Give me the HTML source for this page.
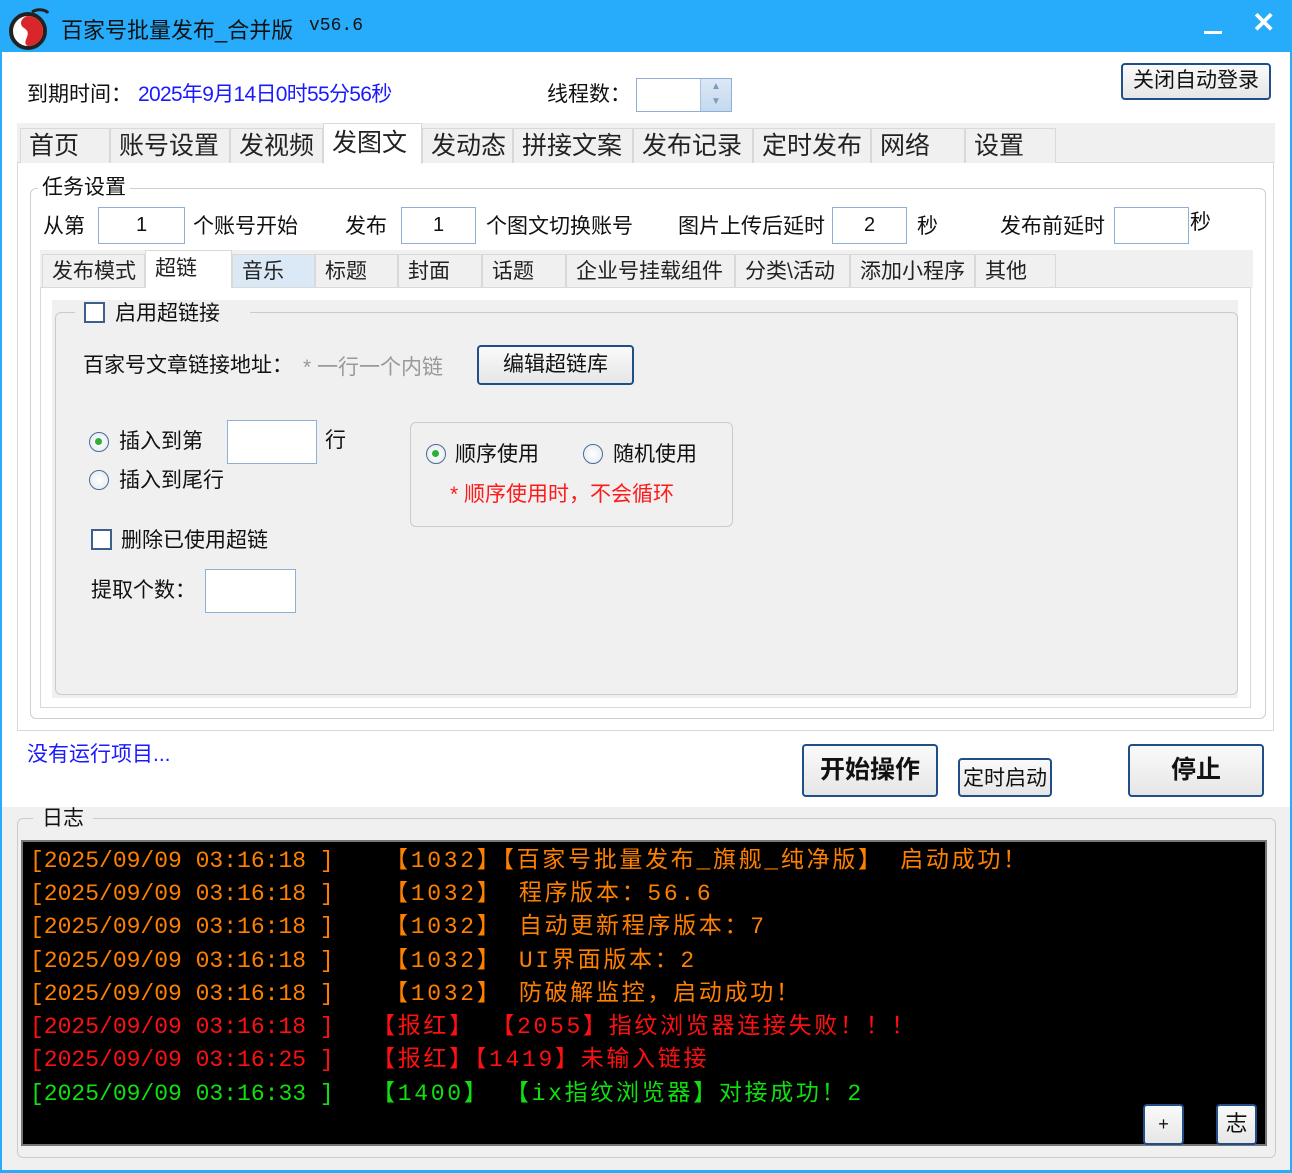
<!DOCTYPE html>
<html><head><meta charset="utf-8"><style>
*{margin:0;padding:0;box-sizing:border-box}
body{width:1292px;height:1173px;position:relative;background:#fff;font-family:"Liberation Sans","Noto Sans CJK SC",sans-serif;color:#111;overflow:hidden}
.a{position:absolute;white-space:nowrap}
.t{font-size:21px;line-height:1}
.inp{position:absolute;background:#fff;border:1px solid #8fb0d4;font-size:20px;text-align:center}
.btn{position:absolute;border:2px solid #1f4f86;border-radius:4px;background:linear-gradient(#fafafa,#e6e6e6);text-align:center;color:#111}
.tab{position:absolute;top:128px;height:35px;border:1px solid #d9d9d9;border-bottom:none;background:#f0f0f0;font-size:25px;line-height:34px;padding-left:8px;color:#222}
.st{position:absolute;top:254px;height:33px;border:1px solid #d9d9d9;border-bottom:none;background:#f0f0f0;font-size:21px;line-height:33px;padding-left:9px;color:#222}
.rad{position:absolute;width:20px;height:20px;border-radius:50%;border:1.5px solid #4a6c93;background:radial-gradient(#fff,#e2e7ee)}
.rad.on::after{content:"";position:absolute;left:5px;top:5px;width:7px;height:7px;border-radius:50%;background:#2fae3a}
.cb{position:absolute;width:21px;height:21px;border:2px solid #3c5f8c;background:#fff}
.log{position:absolute;left:30px;font-family:"Liberation Mono","Noto Sans CJK SC",monospace;font-size:23px;line-height:33px;white-space:nowrap}
.w{letter-spacing:2.7px}
.o{color:#ff8000}.r{color:#ff1010}.g{color:#10e010}
</style></head><body>
<div class="a" style="left:0;top:0;width:1292px;height:52px;background:#27acfc"></div>
<svg class="a" style="left:6px;top:6px" width="46" height="44" viewBox="0 0 46 44"><circle cx="22" cy="25" r="17" fill="#fff" stroke="#222" stroke-width="4"/><path d="M22 10 A15 15 0 0 1 22 40 C14 36 28 28 18 22 C12 18 16 11 22 10Z" fill="#d9262a"/><path d="M26 6 C32 2 40 4 42 7" stroke="#222" stroke-width="3" fill="none"/></svg>
<div class="a" style="left:61px;top:13px;font-size:22px;color:#111">百家号批量发布_合并版</div>
<div class="a" style="left:309px;top:16px;font-size:18px;font-family:'Liberation Mono',monospace;color:#111">v56.6</div>
<div class="a" style="left:1204px;top:31px;width:18px;height:3px;background:#fff"></div>
<div class="a" style="left:1252px;top:6px;font-size:28px;color:#fff;font-weight:bold">✕</div>
<div class="a" style="left:0;top:52px;width:2px;height:1121px;background:#27acfc"></div>
<div class="a" style="left:1290px;top:52px;width:2px;height:1121px;background:#27acfc"></div>
<div class="a" style="left:0;top:1170px;width:1292px;height:3px;background:#27acfc"></div>

<div class="a t" style="left:27px;top:84px">到期时间：</div>
<div class="a t" style="left:138px;top:84px;color:#1a1aff;letter-spacing:-0.7px">2025年9月14日0时55分56秒</div>
<div class="a t" style="left:547px;top:84px">线程数：</div>
<div class="inp" style="left:636px;top:78px;width:96px;height:34px;border-color:#8fb0d4"></div>
<div class="a" style="left:700px;top:79px;width:31px;height:32px;background:linear-gradient(#dbe8f6,#c5d9ef);border-left:1px solid #a9c2de;font-size:10px;color:#7d9ab8;text-align:center;line-height:15px">▲<br>▼</div>
<div class="btn" style="left:1121px;top:63px;width:150px;height:37px;font-size:21px;line-height:32px">关闭自动登录</div>

<div class="a" style="left:17px;top:123px;width:1258px;height:40px;background:#f0f0f0"></div>
<div class="a" style="left:17px;top:162px;width:1257px;height:569px;border:1px solid #d9d9d9;background:#fff"></div>
<div class="tab" style="left:20px;width:90px">首页</div>
<div class="tab" style="left:110px;width:120px">账号设置</div>
<div class="tab" style="left:230px;width:93px">发视频</div>
<div class="tab" style="left:323px;width:99px;top:123px;height:41px;background:#fff;line-height:38px">发图文</div>
<div class="tab" style="left:422px;width:91px">发动态</div>
<div class="tab" style="left:513px;width:120px">拼接文案</div>
<div class="tab" style="left:633px;width:120px">发布记录</div>
<div class="tab" style="left:753px;width:118px">定时发布</div>
<div class="tab" style="left:871px;width:94px">网络</div>
<div class="tab" style="left:965px;width:91px">设置</div>

<div class="a" style="left:30px;top:188px;width:1236px;height:531px;border:1px solid #cfcfcf;border-radius:6px"></div>
<div class="a t" style="left:38px;top:177px;background:#fff;padding:0 4px">任务设置</div>
<div class="a t" style="left:43px;top:216px">从第</div>
<div class="inp" style="left:98px;top:207px;width:87px;height:37px;line-height:35px">1</div>
<div class="a t" style="left:193px;top:216px">个账号开始</div>
<div class="a t" style="left:345px;top:216px">发布</div>
<div class="inp" style="left:401px;top:207px;width:75px;height:37px;line-height:35px">1</div>
<div class="a t" style="left:486px;top:216px">个图文切换账号</div>
<div class="a t" style="left:678px;top:216px">图片上传后延时</div>
<div class="inp" style="left:832px;top:207px;width:75px;height:37px;line-height:35px">2</div>
<div class="a t" style="left:917px;top:216px">秒</div>
<div class="a t" style="left:1000px;top:216px">发布前延时</div>
<div class="inp" style="left:1114px;top:207px;width:75px;height:37px"></div>
<div class="a t" style="left:1190px;top:212px">秒</div>

<div class="a" style="left:40px;top:250px;width:1213px;height:38px;background:#f0f0f0"></div>
<div class="a" style="left:40px;top:287px;width:1211px;height:421px;border:1px solid #d9d9d9;background:#fff"></div>
<div class="st" style="left:42px;width:103px">发布模式</div>
<div class="st" style="left:145px;width:87px;top:250px;height:38px;background:#fff;line-height:36px">超链</div>
<div class="st" style="left:232px;width:83px;background:#dbe8f6">音乐</div>
<div class="st" style="left:315px;width:83px">标题</div>
<div class="st" style="left:398px;width:84px">封面</div>
<div class="st" style="left:482px;width:84px">话题</div>
<div class="st" style="left:566px;width:169px">企业号挂载组件</div>
<div class="st" style="left:735px;width:115px">分类\活动</div>
<div class="st" style="left:850px;width:125px">添加小程序</div>
<div class="st" style="left:975px;width:81px">其他</div>

<div class="a" style="left:52px;top:300px;width:1186px;height:398px;background:#f0f0f0"></div>
<div class="a" style="left:55px;top:312px;width:1183px;height:383px;border:1px solid #cbcbcb;border-radius:6px"></div>
<div class="a" style="left:75px;top:300px;width:175px;height:26px;background:#f0f0f0"></div>
<div class="cb" style="left:84px;top:302px;border-color:#3c5f8c"></div>
<div class="a t" style="left:115px;top:303px">启用超链接</div>
<div class="a t" style="left:83px;top:355px">百家号文章链接地址：</div>
<div class="a t" style="left:303px;top:357px;color:#999">* 一行一个内链</div>
<div class="btn" style="left:477px;top:345px;width:157px;height:40px;font-size:21px;line-height:36px">编辑超链库</div>
<div class="rad on" style="left:89px;top:432px"></div>
<div class="a t" style="left:119px;top:431px">插入到第</div>
<div class="inp" style="left:227px;top:420px;width:90px;height:44px"></div>
<div class="a t" style="left:325px;top:430px">行</div>
<div class="rad" style="left:89px;top:470px"></div>
<div class="a t" style="left:119px;top:470px">插入到尾行</div>
<div class="a" style="left:410px;top:422px;width:323px;height:105px;border:1px solid #cbcbcb;border-radius:6px"></div>
<div class="rad on" style="left:426px;top:444px"></div>
<div class="a t" style="left:455px;top:444px">顺序使用</div>
<div class="rad" style="left:583px;top:444px"></div>
<div class="a t" style="left:613px;top:444px">随机使用</div>
<div class="a t" style="left:450px;top:484px;color:#ff1a1a">* 顺序使用时，不会循环</div>
<div class="cb" style="left:91px;top:529px"></div>
<div class="a t" style="left:121px;top:530px">删除已使用超链</div>
<div class="a t" style="left:91px;top:580px">提取个数：</div>
<div class="inp" style="left:205px;top:569px;width:91px;height:44px"></div>

<div class="a t" style="left:27px;top:744px;color:#1a1aff">没有运行项目...</div>
<div class="btn" style="left:802px;top:744px;width:136px;height:53px;font-size:25px;font-weight:bold;line-height:48px">开始操作</div>
<div class="btn" style="left:958px;top:758px;width:94px;height:39px;font-size:21px;line-height:38px">定时启动</div>
<div class="btn" style="left:1128px;top:744px;width:136px;height:53px;font-size:25px;font-weight:bold;line-height:48px">停止</div>

<div class="a" style="left:2px;top:807px;width:1288px;height:363px;background:#f0f0f0"></div>
<div class="a" style="left:17px;top:818px;width:1259px;height:340px;border:1px solid #cbcbcb;border-radius:6px"></div>
<div class="a t" style="left:33px;top:808px;background:#f0f0f0;padding:0 9px">日志</div>
<div class="a" style="left:21px;top:840px;width:1246px;height:306px;background:#000;border:2px solid #777"></div>
<div class="log o" style="top:845px">[2025/09/09 03:16:18 ]</div><div class="log o w" style="left:385px;top:845px">【1032】【百家号批量发布_旗舰_纯净版】 启动成功！</div>
<div class="log o" style="top:878px">[2025/09/09 03:16:18 ]</div><div class="log o w" style="left:385px;top:878px">【1032】 程序版本：56.6</div>
<div class="log o" style="top:911px">[2025/09/09 03:16:18 ]</div><div class="log o w" style="left:385px;top:911px">【1032】 自动更新程序版本：7</div>
<div class="log o" style="top:945px">[2025/09/09 03:16:18 ]</div><div class="log o w" style="left:385px;top:945px">【1032】 UI界面版本：2</div>
<div class="log o" style="top:978px">[2025/09/09 03:16:18 ]</div><div class="log o w" style="left:385px;top:978px">【1032】 防破解监控，启动成功！</div>
<div class="log r" style="top:1011px">[2025/09/09 03:16:18 ]</div><div class="log r w" style="left:372px;top:1011px">【报红】 【2055】指纹浏览器连接失败！！！</div>
<div class="log r" style="top:1044px">[2025/09/09 03:16:25 ]</div><div class="log r w" style="left:372px;top:1044px">【报红】【1419】未输入链接</div>
<div class="log g" style="top:1078px">[2025/09/09 03:16:33 ]</div><div class="log g w" style="left:372px;top:1078px">【1400】 【ix指纹浏览器】对接成功！2</div>
<div class="btn" style="left:1143px;top:1104px;width:41px;height:41px;font-size:18px;line-height:36px">+</div>
<div class="btn" style="left:1216px;top:1104px;width:41px;height:41px;font-size:22px;line-height:36px">志</div>
</body></html>
